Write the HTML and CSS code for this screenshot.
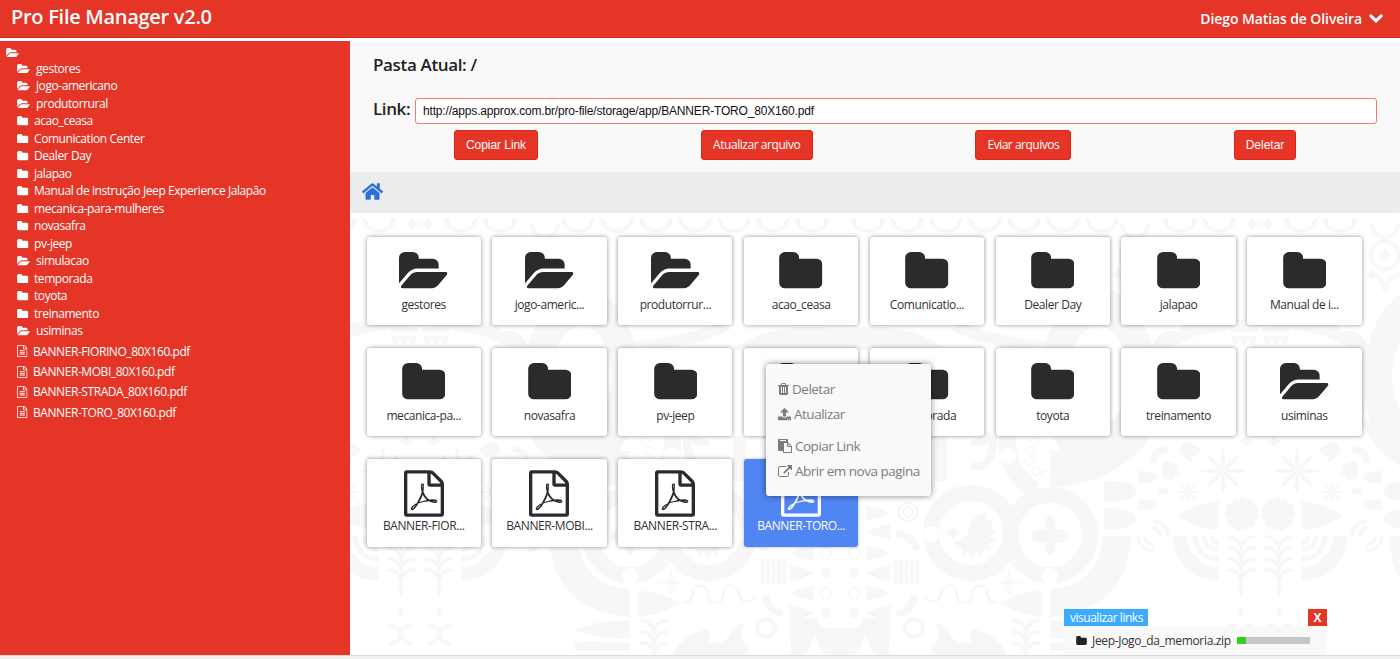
FILE: index.html
```html
<!DOCTYPE html>
<html lang="pt-BR">
<head>
<meta charset="utf-8">
<title>Pro File Manager v2.0</title>
<link rel="stylesheet" href="styles.css">
</head>
<body>
<svg class="defs" width="0" height="0">
  <symbol id="folder" viewBox="0 128 1664 1408"><path d="M1664 608v704q0 92-66 158t-158 66h-1216q-92 0-158-66t-66-158v-960q0-92 66-158t158-66h320q92 0 158 66t66 158v32h672q92 0 158 66t66 158z"/></symbol>
  <symbol id="open" viewBox="0 128 1879 1408"><path d="M1879 952q0 31-31 66l-336 396q-43 51-120.500 86.500t-143.500 35.500h-1088q-34 0-60.500-13t-26.500-43q0-31 31-66l336-396q43-51 120.500-86.500t143.500-35.500h1088q34 0 60.500 13t26.500 43zm-343-344v160h-832q-94 0-197 47.500t-164 119.500l-337 396-5 6q0-4-.5-12.500t-.5-12.500v-960q0-92 66-158t158-66h320q92 0 158 66t66 158v32h544q92 0 158 66t66 158z"/></symbol>
  <symbol id="file" viewBox="0 0 1536 1792"><path d="M1468 380q28 28 48 76t20 88v1152q0 40-28 68t-68 28h-1344q-40 0-68-28t-28-68v-1600q0-40 28-68t68-28h896q40 0 88 20t76 48zm-444-244v376h376q-10-29-22-41l-313-313q-12-12-41-22zm384 1528v-1024h-416q-40 0-68-28t-28-68v-416h-768v1536h1280zm-1024-864q0-14 9-23t23-9h704q14 0 23 9t9 23v64q0 14-9 23t-23 9h-704q-14 0-23-9t-9-23v-64zm736 224q14 0 23 9t9 23v64q0 14-9 23t-23 9h-704q-14 0-23-9t-9-23v-64q0-14 9-23t23-9h704zm0 256q14 0 23 9t9 23v64q0 14-9 23t-23 9h-704q-14 0-23-9t-9-23v-64q0-14 9-23t23-9h704z"/></symbol>
  <symbol id="pdf" viewBox="0 0 1536 1792"><path d="M1468 380q28 28 48 76t20 88v1152q0 40-28 68t-68 28h-1344q-40 0-68-28t-28-68v-1600q0-40 28-68t68-28h896q40 0 88 20t76 48zm-444-244v376h376q-10-29-22-41l-313-313q-12-12-41-22zm384 1528v-1024h-416q-40 0-68-28t-28-68v-416h-768v1536h1280zm-514-593q33 26 84 56 59-7 117-7 147 0 177 49 16 22 2 52 0 1-1 2l-2 2v1q-6 38-71 38-48 0-115-20t-130-53q-221 24-392 83-153 262-242 262-15 0-28-7l-24-12q-1-1-6-5-10-10-6-36 9-40 56-91.500t132-96.500q14-9 23 6 2 2 2 4 52-85 107-197 68-136 104-262-24-82-30.500-159.500t6.500-127.500q11-40 42-40h22q23 0 35 15 18 21 9 68-2 6-4 8 1 3 1 8v30q-2 123-14 192 55 164 146 238zm-576 411q52-24 137-158-51 40-87.500 84t-49.500 74zm398-920q-15 42-2 132 1-7 7-44 0-3 7-43 1-4 4-8-1-1-1-2-1-2-1-3-1-22-13-36 0 1-1 2v2zm-124 661q135-54 284-81-2-1-13-9.500t-16-13.500q-76-67-127-176-27 86-83 197-30 56-45 83zm646-16q-24-24-140-24 76 28 124 28 14 0 18-1 0-1-2-3z"/></symbol>
  <symbol id="trash" viewBox="192 128 1408 1536"><path d="M704 1376v-704q0-14-9-23t-23-9h-64q-14 0-23 9t-9 23v704q0 14 9 23t23 9h64q14 0 23-9t9-23zm256 0v-704q0-14-9-23t-23-9h-64q-14 0-23 9t-9 23v704q0 14 9 23t23 9h64q14 0 23-9t9-23zm256 0v-704q0-14-9-23t-23-9h-64q-14 0-23 9t-9 23v704q0 14 9 23t23 9h64q14 0 23-9t9-23zm-544-992h448l-48-117q-7-9-17-11h-317q-10 2-17 11zm928 32v64q0 14-9 23t-23 9h-96v948q0 83-47 143.500t-113 60.500h-832q-66 0-113-58.500t-47-141.500v-952h-96q-14 0-23-9t-9-23v-64q0-14 9-23t23-9h309l70-167q15-37 54-63t79-26h320q40 0 79 26t54 63l70 167h309q14 0 23 9t9 23z"/></symbol>
  <symbol id="upload" viewBox="64 64 1664 1600"><path d="M1344 1472q0-26-19-45t-45-19-45 19-19 45 19 45 45 19 45-19 19-45zm256 0q0-26-19-45t-45-19-45 19-19 45 19 45 45 19 45-19 19-45zm128-224v320q0 40-28 68t-68 28h-1472q-40 0-68-28t-28-68v-320q0-40 28-68t68-28h427q21 56 70.500 92t110.500 36h256q61 0 110.500-36t70.500-92h427q40 0 68 28t28 68zm-325-648q-17 40-59 40h-256v448q0 26-19 45t-45 19h-256q-26 0-45-19t-19-45v-448h-256q-42 0-59-40-17-39 14-69l448-448q18-19 45-19t45 19l448 448q31 30 14 69z"/></symbol>
  <symbol id="paste" viewBox="0 0 1792 1792"><path d="M768 1664h896v-640h-416q-40 0-68-28t-28-68v-416h-384v1152zm256-1440v-64q0-13-9.500-22.500t-22.500-9.500h-704q-13 0-22.500 9.500t-9.500 22.500v64q0 13 9.500 22.500t22.500 9.500h704q13 0 22.500-9.500t9.500-22.500zm256 672h299l-299-299v299zm512 128v672q0 40-28 68t-68 28h-960q-40 0-68-28t-28-68v-160h-544q-40 0-68-28t-28-68v-1344q0-40 28-68t68-28h1088q40 0 68 28t28 68v328q21 13 36 28l408 408q28 28 48 76t20 88z"/></symbol>
  <symbol id="external" viewBox="0 0 1792 1536"><path d="M1408 928v320q0 119-84.500 203.500t-203.500 84.500h-832q-119 0-203.500-84.500t-84.500-203.500v-832q0-119 84.500-203.500t203.500-84.500h704q14 0 23 9t9 23v64q0 14-9 23t-23 9h-704q-66 0-113 47t-47 113v832q0 66 47 113t113 47h832q66 0 113-47t47-113v-320q0-14 9-23t23-9h64q14 0 23 9t9 23zm384-864v512q0 26-19 45t-45 19-45-19l-176-176-652 652q-10 10-23 10t-23-10l-114-114q-10-10-10-23t10-23l652-652-176-176q-19-19-19-45t19-45 45-19h512q26 0 45 19t19 45z"/></symbol>
  <symbol id="chevron" viewBox="90 533 1612 1035"><path d="M1683 808l-742 741q-19 19-45 19t-45-19l-742-741q-19-19-19-45.500t19-45.500l166-165q19-19 45-19t45 19l531 531 531-531q19-19 45-19t45 19l166 165q19 19 19 45.500t-19 45.500z"/></symbol>
  <symbol id="home" viewBox="0 32 576 448"><path d="M280.370 148.260L96 300.110V464a16 16 0 0 0 16 16l112.060-.29a16 16 0 0 0 15.920-16V368a16 16 0 0 1 16-16h64a16 16 0 0 1 16 16v95.640a16 16 0 0 0 16 16.050L464 480a16 16 0 0 0 16-16V300L295.670 148.260a12.190 12.190 0 0 0-15.300 0zM571.600 251.470L488 182.560V44.050a12 12 0 0 0-12-12h-56a12 12 0 0 0-12 12v72.610L318.470 43a48 48 0 0 0-61 0L4.340 251.470a12 12 0 0 0-1.600 16.900l25.500 31A12 12 0 0 0 45.150 301l235.220-193.740a12.190 12.190 0 0 1 15.300 0L530.900 301a12 12 0 0 0 16.900-1.600l25.500-31a12 12 0 0 0-1.700-16.930z"/></symbol>
</svg>

<header class="topbar">
  <h1 class="brand">Pro File Manager v2.0</h1>
  <div class="user"><span>Diego Matias de Oliveira</span><svg class="chev"><use href="#chevron"/></svg></div>
</header>

<div class="body">
  <aside class="sidebar">
    <div class="root"><svg class="i-open"><use href="#open"/></svg></div>
    <ul class="tree">
      <li><svg class="i-open"><use href="#open"/></svg>gestores</li>
      <li><svg class="i-open"><use href="#open"/></svg>jogo-americano</li>
      <li><svg class="i-open"><use href="#open"/></svg>produtorrural</li>
      <li><svg class="i-folder"><use href="#folder"/></svg>acao_ceasa</li>
      <li><svg class="i-folder"><use href="#folder"/></svg>Comunication Center</li>
      <li><svg class="i-folder"><use href="#folder"/></svg>Dealer Day</li>
      <li><svg class="i-folder"><use href="#folder"/></svg>jalapao</li>
      <li><svg class="i-folder"><use href="#folder"/></svg>Manual de instrução Jeep Experience Jalapão</li>
      <li><svg class="i-folder"><use href="#folder"/></svg>mecanica-para-mulheres</li>
      <li><svg class="i-folder"><use href="#folder"/></svg>novasafra</li>
      <li><svg class="i-folder"><use href="#folder"/></svg>pv-jeep</li>
      <li><svg class="i-open"><use href="#open"/></svg>simulacao</li>
      <li><svg class="i-folder"><use href="#folder"/></svg>temporada</li>
      <li><svg class="i-folder"><use href="#folder"/></svg>toyota</li>
      <li><svg class="i-folder"><use href="#folder"/></svg>treinamento</li>
      <li><svg class="i-open"><use href="#open"/></svg>usiminas</li>
    </ul>
    <ul class="tree files">
      <li><svg class="i-file"><use href="#file"/></svg>BANNER-FIORINO_80X160.pdf</li>
      <li><svg class="i-file"><use href="#file"/></svg>BANNER-MOBI_80X160.pdf</li>
      <li><svg class="i-file"><use href="#file"/></svg>BANNER-STRADA_80X160.pdf</li>
      <li><svg class="i-file"><use href="#file"/></svg>BANNER-TORO_80X160.pdf</li>
    </ul>
  </aside>

  <main class="main">
    <section class="panel">
      <h2 class="current">Pasta Atual: /</h2>
      <div class="linkrow"><label class="label">Link:</label><div class="field">http://apps.approx.com.br/pro-file/storage/app/BANNER-TORO_80X160.pdf</div></div>
      <div class="actions">
        <button class="btn b1">Copiar Link</button>
        <button class="btn b2">Atualizar arquivo</button>
        <button class="btn b3">Eviar arquivos</button>
        <button class="btn b4">Deletar</button>
      </div>
    </section>
    <nav class="crumb"><svg class="home"><use href="#home"/></svg></nav>

    <section class="canvas">
      <svg class="pattern" viewBox="350 213 1050 442">
        <defs>
          <g id="petal"><path d="M0 0C-3-8-3-17 0-24C3-17 3-8 0 0z"/></g>
          <g id="burst"><use href="#petal"/><use href="#petal" transform="rotate(45)"/><use href="#petal" transform="rotate(90)"/><use href="#petal" transform="rotate(135)"/><use href="#petal" transform="rotate(180)"/><use href="#petal" transform="rotate(225)"/><use href="#petal" transform="rotate(270)"/><use href="#petal" transform="rotate(315)"/></g>
          <path id="star4" d="M0-8Q1.500-1.500 8 0Q1.500 1.500 0 8Q-1.500 1.500-8 0Q-1.500-1.500 0-8z"/>
          <path id="dart" d="M0-8Q12-6 24 0Q12 6 0 8z"/>
          <path id="chev" d="M-14-6Q-3-7 0 4Q3-7 14-6" fill="none" stroke-width="3.500"/>
          <path id="zig" d="M0 0l2.500 2-2.500 2 2.500 2-2.500 2 2.500 2-2.500 2 2.500 2-2.500 2 2.500 2-2.500 2 2.500 2-2.500 2" transform="translate(0 1)" fill="none" stroke-width="2.500"/>
          <g id="half">
            <!-- tile border along the top -->
            <g fill="none" stroke-width="4">
              <path d="M853 218q2 13 15 13t15-13M892 218q2 13 15 13t15-13M931 218q2 13 15 13t15-13M970 218q2 13 15 13t15-13M1009 218q2 13 15 13t15-13M1048 218q2 13 15 13t15-13M1087 218q2 13 15 13t15-13M1165 218q2 13 15 13t15-13M1204 218q2 13 15 13t15-13"/>
              <circle cx="1135" cy="255" r="14"/><path d="M1121 224q3 12 14 14M1149 224q-3 12-14 14M1118 275q14 0 17 16M1152 275q-14 0-17 16"/>
            </g>
            <use href="#star4" x="1252" y="224"/><use href="#star4" x="1135" y="255"/><use href="#star4" x="1118" y="275"/><use href="#star4" x="1148" y="275"/>
            <!-- wide arches between the card rows -->
            <path d="M1152 345Q1162 325 1178 333L1185 322Q1220 322 1260 318V327Q1205 328 1174 346Q1164 400 1170 430H1160Q1150 400 1152 345z"/>
            <path d="M1040 380A58 92 0 0 1 1156 380A58 92 0 0 1 1040 380z"/>
            <ellipse cx="1098" cy="376" rx="30" ry="50" class="hole"/>
            <path d="M840 330Q900 318 950 350H840zM960 322Q1000 338 1050 342L1030 350Q980 345 950 330z"/>
            <path d="M1230 328h28v4h-28zM1231 336h26l-4 10-4-8-5 8-5-8-4 8z"/>
            <!-- ladders of darts and dots on the axis -->
            <use href="#dart" x="866" y="513"/><use href="#dart" transform="translate(890 532)scale(-1 1)"/><use href="#dart" x="866" y="553"/><use href="#dart" transform="translate(890 573)scale(-1 1)"/><use href="#dart" x="866" y="593"/><use href="#dart" transform="translate(890 613)scale(-1 1)"/>
            <g fill="none" stroke-width="2"><circle cx="854" cy="553" r="5.500"/><circle cx="854" cy="593" r="5.500"/></g>
            <circle cx="854" cy="573" r="5"/><circle cx="854" cy="613" r="5"/>
            <path d="M934 436h14l-2 3 2 3-2 3 2 3-2 3 2 3-2 3 2 3-2 3 2 3-2 3 2 3-2 3 2 3-2 3h-12z"/>
            <use href="#zig" x="894" y="559"/><use href="#zig" x="899.500" y="559"/><use href="#zig" x="905" y="559"/><use href="#zig" x="910.500" y="559"/><use href="#zig" x="916" y="559"/>
            <g fill="none">
              <circle cx="908" cy="512" r="9.500" stroke-width="2.500"/><circle cx="908" cy="512" r="5" stroke-width="2"/>
              <path d="M896 534Q914 535 917 551M915 596Q912 611 897 614" stroke-width="7"/>
              <circle cx="914" cy="628" r="9" stroke-width="4"/>
              <path d="M925 596C927 602 937 605 940 596C943 583 956 582 956 592C956 606 971 606 972 594C973 583 986 583 987 592C988 602 994 603 997 602" stroke-width="2.500"/>
              <path d="M1009 571v24M998 583h23M1006 576v14M1012 576v14" stroke-width="1.500"/>
              <path d="M971 442Q985 445 989 432M971 466Q989 470 992 449Q994 443 994 434" stroke-width="8"/>
              <path d="M1008 435Q1003 468 1034 491" stroke-width="17"/>
            </g>
            <path d="M840 628h10q10 0 15-10h26q-2 24-2 37h-12q-8-6-12-22q-4 16-12 22h-13z"/>
            <path d="M936 622q10 4 16 15q6 8 19 5v-13q28 5 36 26h-72q-8-8 2-12q3-10-1-21z"/>
            <!-- twin medallions -->
            <g fill="none" stroke-width="16"><circle cx="971" cy="533" r="40"/><circle cx="1050" cy="535" r="40"/></g>
            <circle cx="931" cy="534" r="8" class="hole"/>
            <circle cx="1008" cy="456" r="8" class="hole"/>
            <circle cx="1050" cy="576" r="8" class="hole"/>
            <use href="#star4" x="953" y="533"/>
            <path d="M987 513Q970 515 968 533Q964 543 954 541Q955 549 962 549L963 556 969 552 971 559 976 552 982 557 984 549 991 549 989 543 996 540 990 536 996 532 990 528 994 520 987 520z"/>
            <path d="M1050 515Q1058 520 1055 530Q1065 527 1070 536Q1065 545 1055 542Q1058 550 1050 555Q1042 550 1045 542Q1035 545 1030 536Q1035 527 1045 530Q1042 520 1050 515z"/>
            <path d="M1103 536H1131Q1128 610 1050 617V589Q1100 586 1103 536zM1000 603Q1020 591 1042 591V617Q1020 615 1000 603z"/>
            <path d="M1050 451Q1110 448 1132 420H1160Q1130 482 1050 488z"/>
            <g fill="none" stroke-width="1.300"><circle cx="1035" cy="441" r="4"/><circle cx="1030" cy="451" r="4"/><circle cx="1030" cy="461" r="4"/><circle cx="1036" cy="471" r="4"/><circle cx="1045" cy="475" r="4"/></g>
            <path d="M1104 481Q1136 480 1136 491Q1136 502 1104 501zM1104 508Q1136 508 1136 519Q1136 530 1104 529zM1138 471Q1157 471 1157 477Q1157 484 1138 483zM1138 499Q1157 499 1157 505Q1157 511 1138 510zM1159 488Q1169 488 1169 491Q1169 495 1159 494z"/>
            <!-- flowers and fans -->
            <use href="#burst" transform="translate(1223 471)"/>
            <use href="#burst" transform="translate(1188 492)scale(.45)"/>
            <path d="M1162 464Q1172 458 1179 468L1176 470 1180 474 1173 476 1172 481 1166 478 1163 481zM1179 451Q1184 438 1193 444Q1202 446 1200 454L1196 452 1195 458 1191 456 1192 462 1186 458z"/>
            <path d="M1153 462Q1156 449 1168 449" fill="none" stroke-width="6"/>
            <use href="#star4" x="1246" y="441"/>
            <path d="M1176 516Q1196 503 1218 501V530Q1196 528 1176 516z"/>
            <circle cx="1242" cy="514" r="14"/><circle cx="1242" cy="514" r="15" fill="none" stroke-width="3.500" stroke-dasharray="7 1.500"/>
            <g fill="none">
              <path d="M1180 536A38 38 0 0 0 1218 574" stroke-width="14"/><path d="M1195 536A23 23 0 0 0 1218 559" stroke-width="5"/><path d="M1204 536A14 14 0 0 0 1218 550M1211 536A7 7 0 0 0 1218 543" stroke-width="4"/>
              <path d="M1138 536A15 15 0 0 0 1153 551M1145 536A8 8 0 0 0 1153 544M1153 521A15 15 0 0 1 1168 536M1153 528A8 8 0 0 1 1160 536" stroke-width="4"/>
            </g>
            <use href="#chev" x="1241" y="543"/><use href="#chev" x="1241" y="554"/><use href="#chev" x="1241" y="565"/><use href="#chev" x="1241" y="576"/>
            <path d="M1241 583q5 7 0 15q-5-8 0-15zM1241 606q5 6 0 12q-5-6 0-12z"/>
            <path d="M1229 625Q1239 626 1241 634Q1243 643 1253 644M1253 625Q1242 626 1241 634Q1239 643 1229 644" fill="none" stroke-width="4"/>
            <use href="#chev" x="1026" y="627"/><use href="#chev" x="1026" y="638"/><use href="#chev" x="1026" y="649"/>
            <path d="M1050 621Q1080 619 1105 630Q1080 640 1050 638zM1050 643Q1080 641 1105 642V651H1050z"/>
          </g>
        </defs>
        <g class="ink">
          <use href="#half"/>
          <use href="#half" transform="translate(1680 0)scale(-1 1)"/>
          <use href="#half" transform="translate(2520 0)scale(-1 1)"/>
          <use href="#half" transform="translate(-840 0)"/>
        </g>
      </svg>

      <div class="grid">
        <div class="card"><svg class="c-open"><use href="#open"/></svg><span>gestores</span></div>
        <div class="card"><svg class="c-open"><use href="#open"/></svg><span>jogo-americ...</span></div>
        <div class="card"><svg class="c-open"><use href="#open"/></svg><span>produtorrur...</span></div>
        <div class="card"><svg class="c-folder"><use href="#folder"/></svg><span>acao_ceasa</span></div>
        <div class="card"><svg class="c-folder"><use href="#folder"/></svg><span>Comunicatio...</span></div>
        <div class="card"><svg class="c-folder"><use href="#folder"/></svg><span>Dealer Day</span></div>
        <div class="card"><svg class="c-folder"><use href="#folder"/></svg><span>jalapao</span></div>
        <div class="card"><svg class="c-folder"><use href="#folder"/></svg><span>Manual de i...</span></div>
        <div class="card"><svg class="c-folder"><use href="#folder"/></svg><span>mecanica-pa...</span></div>
        <div class="card"><svg class="c-folder"><use href="#folder"/></svg><span>novasafra</span></div>
        <div class="card"><svg class="c-folder"><use href="#folder"/></svg><span>pv-jeep</span></div>
        <div class="card"><svg class="c-open"><use href="#open"/></svg></div>
        <div class="card"><svg class="c-folder"><use href="#folder"/></svg><span>temporada</span></div>
        <div class="card"><svg class="c-folder"><use href="#folder"/></svg><span>toyota</span></div>
        <div class="card"><svg class="c-folder"><use href="#folder"/></svg><span>treinamento</span></div>
        <div class="card"><svg class="c-open"><use href="#open"/></svg><span>usiminas</span></div>
        <div class="card pdf"><svg class="c-pdf"><use href="#pdf"/></svg><span>BANNER-FIOR...</span></div>
        <div class="card pdf"><svg class="c-pdf"><use href="#pdf"/></svg><span>BANNER-MOBI...</span></div>
        <div class="card pdf"><svg class="c-pdf"><use href="#pdf"/></svg><span>BANNER-STRA...</span></div>
        <div class="card pdf selected"><svg class="c-pdf"><use href="#pdf"/></svg><span>BANNER-TORO...</span></div>
      </div>

      <div class="menu">
        <div class="item"><svg class="m-trash"><use href="#trash"/></svg>Deletar</div>
        <div class="item"><svg class="m-up"><use href="#upload"/></svg>Atualizar</div>
        <div class="item split"><svg class="m-paste"><use href="#paste"/></svg>Copiar Link</div>
        <div class="item"><svg class="m-ext"><use href="#external"/></svg>Abrir em nova pagina</div>
      </div>

      <div class="upload">
        <div class="upload-head"><span class="view">visualizar links</span><span class="close">X</span></div>
        <div class="upload-row"><svg class="u-folder"><use href="#folder"/></svg><span class="zip">Jeep-Jogo_da_memoria.zip</span><div class="bar"><div class="fill" style="width:12%"></div></div></div>
      </div>
    </section>
  </main>
</div>
</body>
</html>
```
FILE: styles.css
```css
* { box-sizing: border-box; }
body {
  margin: 0;
  width: 1400px;
  height: 659px;
  overflow: hidden;
  display: flex;
  flex-direction: column;
  background: #f1f1f1;
  font-family: "Open Sans", "Noto Sans", sans-serif;
  color: #222;
}
h1, h2, ul { margin: 0; padding: 0; font-weight: 600; }
svg { flex: none; fill: currentColor; }
.defs { position: absolute; }

.topbar {
  height: 38px;
  flex: none;
  display: flex;
  justify-content: space-between;
  padding: 0 17px 0 11px;
  background: #e43527;
  border-bottom: 1px solid #d92417;
  color: #fff;
}
.brand { font-size: 20px; line-height: 34px; letter-spacing: -0.28px; }
.user { display: flex; align-items: center; gap: 7px; font-size: 14px; font-weight: 600; letter-spacing: -0.1px; }
.chev { width: 14px; height: 9px; }

.body { height: 618px; display: flex; border-top: 3px solid #fff; border-bottom: 1px solid #dcdcdc; }
.sidebar { width: 350px; flex: none; padding-top: 3px; background: #e43527; color: #fff; font-size: 12px; }
.root { height: 15.500px; padding-left: 6px; display: flex; align-items: center; }
.root svg { margin: 1px 0 0; }
.tree { list-style: none; padding-left: 17px; font-weight: 400; letter-spacing: -0.43px; }
.tree li { height: 17.500px; display: flex; align-items: center; white-space: nowrap; }
.i-open { width: 13px; height: 9.500px; margin-right: 6px; }
.i-folder { width: 11.500px; height: 9.500px; margin-right: 5.500px; }
.i-file { width: 10.500px; height: 12px; margin-right: 5.500px; }
.files { padding-top: 1.500px; letter-spacing: -0.43px; }
.files li { height: 20.400px; }

.main { width: 1050px; display: flex; flex-direction: column; }
.panel { height: 131px; padding: 14px 23px 0 23px; background: #f9f9f9; }
.current { font-size: 17px; line-height: 20px; letter-spacing: -0.35px; }
.linkrow { display: flex; margin-top: 22px; height: 27px; }
.label { width: 42px; font-size: 17px; font-weight: 600; line-height: 24px; letter-spacing: -0.4px; }
.field { flex: 1; height: 26px; margin-top: 1px; padding-left: 7px; background: #fff; border: 1px solid #ee7a70; border-radius: 3px; font: 12px/24px "Liberation Sans", Arial, sans-serif; letter-spacing: -0.17px; color: #111; }
.actions { display: flex; justify-content: space-between; margin-top: 6px; padding: 0 81px 0 81px; }
.btn { height: 30px; padding: 0 0 1px; border: 1px solid #de2417; border-radius: 3px; background: #e43527; color: #fff; font: 12px "Open Sans", sans-serif; letter-spacing: -0.5px; }
.b1 { width: 84px; font-family: "Liberation Sans", Arial, sans-serif; letter-spacing: -0.05px; }
.b2 { width: 112px; letter-spacing: -0.45px; }
.b3 { width: 96px; }
.b4 { width: 62px; font-family: "Liberation Sans", Arial, sans-serif; letter-spacing: 0; }
.crumb { height: 41px; padding: 11px 0 0 12px; background: #ebedee; border-radius: 3px; color: #2a70dc; }
.home { display: block; width: 21px; height: 17px; }

.canvas { position: relative; flex: 1; background: #fff; }
.pattern { position: absolute; left: 0; top: 0; width: 1050px; height: 442px; }
.ink { fill: #f7f7f7; stroke: #f7f7f7; stroke-width: 0; }
.hole { fill: #fff; }
.grid { position: relative; display: grid; grid-template-columns: repeat(8, 1fr); gap: 23px 11.500px; padding: 24px 38.500px 0 16.500px; }
.card { height: 88px; padding-top: 15px; display: flex; flex-direction: column; align-items: center; background: #fff; border-radius: 3px; box-shadow: 0 0 4px rgba(0, 0, 0, .45); color: #292b2c; font-size: 12px; letter-spacing: -0.42px; }
.card span { line-height: 16px; margin-top: 8px; color: #333; }
.c-open { width: 48.500px; height: 36.500px; }
.c-folder { width: 43.500px; height: 36.500px; }
.pdf { padding-top: 11px; letter-spacing: -0.4px; }
.pdf span { margin-top: 1px; }
.c-pdf { width: 40px; height: 47px; }
.selected, .selected span { background: #5085f4; color: #fff; }
.selected { box-shadow: 0 0 3px rgba(40, 70, 140, .4); }

.menu { position: absolute; left: 416px; top: 151px; width: 165px; height: 132px; padding: 12px 12px 0; background: #f9f9f9; border-radius: 3px; box-shadow: 0 0 6px rgba(0, 0, 0, .5); color: #7c7c7c; font-size: 13.500px; letter-spacing: -0.5px; }
.item { height: 25.500px; display: flex; align-items: center; gap: 3px; white-space: nowrap; }
.split { margin-top: 6px; }
.m-trash { width: 11px; height: 12px; }
.m-up { width: 13px; height: 12.500px; }
.m-paste { width: 14px; height: 14px; }
.m-ext { width: 14px; height: 12px; }

.upload { position: absolute; left: 714px; top: 396px; width: 263px; }
.upload-head { display: flex; justify-content: space-between; height: 17px; color: #fff; font-size: 12px; line-height: 17px; }
.view { width: 84px; padding-left: 6px; background: #3aabff; letter-spacing: -0.48px; white-space: nowrap; }
.close { width: 19px; text-align: center; background: #e43527; font-weight: 700; }
.upload-row { height: 29px; display: flex; align-items: center; padding-left: 12px; background: #f9f9f9; color: #333; font-size: 12px; }
.u-folder { width: 11px; height: 9px; color: #222; margin-right: 5px; }
.zip { width: 139px; margin-right: 6px; letter-spacing: -0.32px; white-space: nowrap; }
.bar { width: 73px; height: 7px; background: #c6c6c6; }
.fill { height: 100%; background: #32cf22; }
```
